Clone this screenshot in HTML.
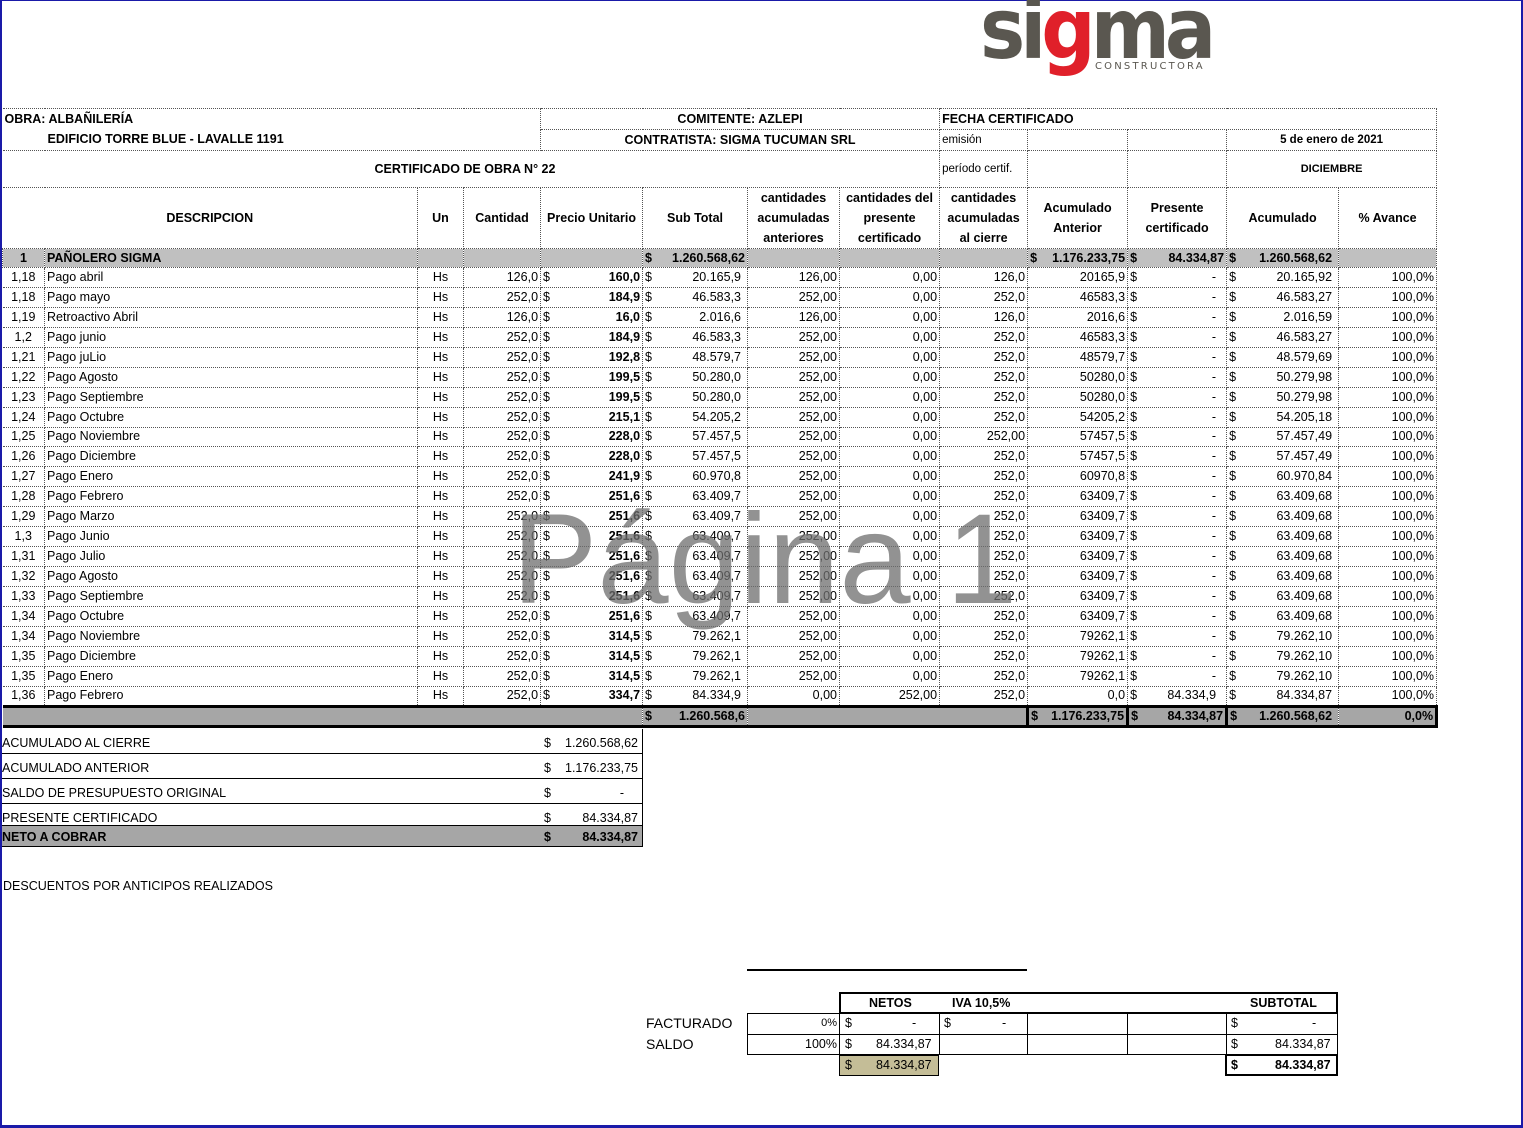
<!DOCTYPE html>
<html><head><meta charset="utf-8"><style>
*{margin:0;padding:0;box-sizing:border-box}
body{width:1523px;height:1128px;position:relative;background:#fff;font-family:"Liberation Sans Narrow","Liberation Sans",sans-serif;font-size:12.5px;color:#000;overflow:hidden}
.frame{position:absolute;left:0;top:0;width:1523px;height:1128px;border:2px solid #1a1aa8;border-top-width:1px;border-bottom-width:3px}
table.m{position:absolute;left:2px;top:108px;border-collapse:collapse;table-layout:fixed;width:1434px}
table.m td{border:1px dotted #555;white-space:nowrap;overflow:hidden;padding:0 2px;height:19px;line-height:17px}
.b{font-weight:bold}.c{text-align:center}.r{text-align:right}
.cur{display:flex;justify-content:space-between}
.sec td{background:#c0c0c0;font-weight:bold}
.tot td{background:#a6a6a6;font-weight:bold;border-top:3px solid #000!important;border-bottom:3px solid #000!important}
.abs{position:absolute;white-space:nowrap}
.logo{position:absolute;left:980px;top:-20px;font-family:"DejaVu Sans",sans-serif;font-weight:bold;font-size:76px;letter-spacing:-5px;color:#5a5750;transform:scaleY(1.1);transform-origin:0 0}
.wm{position:absolute;left:512px;top:486px;font-family:"Liberation Sans",sans-serif;font-size:128px;color:rgba(110,110,110,.75);white-space:nowrap}
.sum{position:absolute;left:2px;width:641px;height:25px;border-bottom:1px solid #000;border-right:1px solid #000;line-height:20px;padding-top:4px}
.sum .v{position:absolute;left:542px;right:4px;display:flex;justify-content:space-between;top:4px}
</style></head><body>
<div class="frame"></div>
<div class="logo">si<span style="color:#e0202a">g</span>ma</div>
<div class="abs" style="left:1095px;top:61px;font-family:'DejaVu Sans',sans-serif;font-size:10px;letter-spacing:2.2px;color:#5a5750">CONSTRUCTORA</div>

<table class="m">
<colgroup><col style="width:42px"><col style="width:373px"><col style="width:46px"><col style="width:77px"><col style="width:102px"><col style="width:105px"><col style="width:92px"><col style="width:100px"><col style="width:88px"><col style="width:100px"><col style="width:99px"><col style="width:112px"><col style="width:98px"></colgroup>
<tr style="height:21px"><td colspan="4" class="b" style="border-bottom:none;border-left:none">OBRA: ALBAÑILERÍA</td><td colspan="4" class="b c">COMITENTE: AZLEPI</td><td colspan="5" class="b">FECHA CERTIFICADO</td></tr>
<tr style="height:21px"><td colspan="4" class="b" style="border-top:none;border-left:none;padding-left:45px">EDIFICIO TORRE BLUE - LAVALLE 1191</td><td colspan="4" class="b c">CONTRATISTA: SIGMA TUCUMAN SRL</td><td style="font-size:11.5px">emisión</td><td></td><td></td><td colspan="2" class="c b" style="font-size:11.5px">5 de enero de 2021</td></tr>
<tr style="height:37px"><td colspan="8" class="b" style="border-left:none;padding-left:372px;text-align:left">CERTIFICADO DE OBRA N° 22</td><td style="font-size:11.5px">período certif.</td><td></td><td></td><td colspan="2" class="c b" style="font-size:11px">DICIEMBRE</td></tr>
<tr style="height:60px" class="b c"><td colspan="2" class="b c" style="border-left:none">DESCRIPCION</td><td class="b c">Un</td><td class="b c">Cantidad</td><td class="b c">Precio Unitario</td><td class="b c">Sub Total</td><td class="b c" style="line-height:20px;white-space:normal">cantidades acumuladas anteriores</td><td class="b c" style="line-height:20px;white-space:normal">cantidades del presente certificado</td><td class="b c" style="line-height:20px;white-space:normal">cantidades acumuladas al cierre</td><td class="b c" style="line-height:20px;white-space:normal">Acumulado Anterior</td><td class="b c" style="line-height:20px;white-space:normal">Presente certificado</td><td colspan="1" class="b c">Acumulado</td><td class="b c">% Avance</td></tr>
<tr class="sec"><td class="c">1</td><td>PAÑOLERO SIGMA</td><td></td><td></td><td></td><td><div class="cur"><span>$</span><span>1.260.568,62</span></div></td><td></td><td></td><td></td><td><div class="cur"><span>$</span><span>1.176.233,75</span></div></td><td><div class="cur"><span>$</span><span>84.334,87</span></div></td><td><div class="cur"><span>$</span><span style="padding-right:4px">1.260.568,62</span></div></td><td></td></tr>
<tbody id="rows"></tbody>
<tr class="tot"><td colspan="5" style="border-left:none"></td><td><div class="cur"><span>$</span><span>1.260.568,6</span></div></td><td colspan="3"></td><td style="border-left:3px solid #000"><div class="cur"><span>$</span><span>1.176.233,75</span></div></td><td style="border-left:3px solid #000"><div class="cur"><span>$</span><span>84.334,87</span></div></td><td style="border-left:3px solid #000"><div class="cur"><span>$</span><span style="padding-right:4px">1.260.568,62</span></div></td><td class="r" style="border-right:3px solid #000">0,0%</td></tr>
</table>
<script>
var d=[["1,18","Pago abril","126,0","160,0","20.165,9","126,00","0,00","126,0","20165,9","-","20.165,92"],
["1,18","Pago mayo","252,0","184,9","46.583,3","252,00","0,00","252,0","46583,3","-","46.583,27"],
["1,19","Retroactivo Abril","126,0","16,0","2.016,6","126,00","0,00","126,0","2016,6","-","2.016,59"],
["1,2","Pago junio","252,0","184,9","46.583,3","252,00","0,00","252,0","46583,3","-","46.583,27"],
["1,21","Pago juLio","252,0","192,8","48.579,7","252,00","0,00","252,0","48579,7","-","48.579,69"],
["1,22","Pago Agosto","252,0","199,5","50.280,0","252,00","0,00","252,0","50280,0","-","50.279,98"],
["1,23","Pago Septiembre","252,0","199,5","50.280,0","252,00","0,00","252,0","50280,0","-","50.279,98"],
["1,24","Pago Octubre","252,0","215,1","54.205,2","252,00","0,00","252,0","54205,2","-","54.205,18"],
["1,25","Pago Noviembre","252,0","228,0","57.457,5","252,00","0,00","252,00","57457,5","-","57.457,49"],
["1,26","Pago Diciembre","252,0","228,0","57.457,5","252,00","0,00","252,0","57457,5","-","57.457,49"],
["1,27","Pago Enero","252,0","241,9","60.970,8","252,00","0,00","252,0","60970,8","-","60.970,84"],
["1,28","Pago Febrero","252,0","251,6","63.409,7","252,00","0,00","252,0","63409,7","-","63.409,68"],
["1,29","Pago Marzo","252,0","251,6","63.409,7","252,00","0,00","252,0","63409,7","-","63.409,68"],
["1,3","Pago Junio","252,0","251,6","63.409,7","252,00","0,00","252,0","63409,7","-","63.409,68"],
["1,31","Pago Julio","252,0","251,6","63.409,7","252,00","0,00","252,0","63409,7","-","63.409,68"],
["1,32","Pago Agosto","252,0","251,6","63.409,7","252,00","0,00","252,0","63409,7","-","63.409,68"],
["1,33","Pago Septiembre","252,0","251,6","63.409,7","252,00","0,00","252,0","63409,7","-","63.409,68"],
["1,34","Pago Octubre","252,0","251,6","63.409,7","252,00","0,00","252,0","63409,7","-","63.409,68"],
["1,34","Pago Noviembre","252,0","314,5","79.262,1","252,00","0,00","252,0","79262,1","-","79.262,10"],
["1,35","Pago Diciembre","252,0","314,5","79.262,1","252,00","0,00","252,0","79262,1","-","79.262,10"],
["1,35","Pago Enero","252,0","314,5","79.262,1","252,00","0,00","252,0","79262,1","-","79.262,10"],
["1,36","Pago Febrero","252,0","334,7","84.334,9","0,00","252,00","252,0","0,0","84.334,9","84.334,87"]];
var h="";function cu(v,b,p){return '<td><div class="cur"><span>$</span><span'+(b?' class="b"':'')+(p?' style="padding-right:'+p+'px"':'')+'>'+v+'</span></div></td>';}
d.forEach(function(r){h+='<tr style="height:19.95px"><td class="c" style="border-left:none">'+r[0]+'</td><td>'+r[1]+'</td><td class="c">Hs</td><td class="r">'+r[2]+'</td>'+cu(r[3],1)+cu(r[4],0,4)+'<td class="r">'+r[5]+'</td><td class="r">'+r[6]+'</td><td class="r">'+r[7]+'</td><td class="r">'+r[8]+'</td>'+cu(r[9],0,8)+cu(r[10],0,4)+'<td class="r">100,0%</td></tr>';});
document.getElementById("rows").innerHTML=h;
</script>
<div class="wm">Página 1</div>

<div class="sum" style="top:729px">ACUMULADO AL CIERRE<div class="v"><span>$</span><span>1.260.568,62</span></div></div>
<div class="sum" style="top:754px">ACUMULADO ANTERIOR<div class="v"><span>$</span><span>1.176.233,75</span></div></div>
<div class="sum" style="top:779px">SALDO DE PRESUPUESTO ORIGINAL<div class="v"><span>$</span><span style="padding-right:14px">-</span></div></div>
<div class="sum" style="top:804px;height:22px">PRESENTE CERTIFICADO<div class="v"><span>$</span><span>84.334,87</span></div></div>
<div class="sum b" style="top:826px;height:21px;background:#a6a6a6;padding-top:1px">NETO A COBRAR<div class="v" style="top:1px"><span>$</span><span>84.334,87</span></div></div>
<div class="abs" style="left:3px;top:879px">DESCUENTOS POR ANTICIPOS REALIZADOS</div>

<div class="abs" style="left:747px;top:969px;width:280px;height:2px;background:#000"></div>
<div class="abs" style="left:839px;top:992px;width:499px;height:22px;border:2px solid #000"></div>
<div class="abs b" style="left:869px;top:996px">NETOS</div>
<div class="abs b" style="left:952px;top:996px">IVA 10,5%</div>
<div class="abs b" style="left:1250px;top:996px">SUBTOTAL</div>
<div class="abs" style="left:646px;top:1015px;font-family:'Liberation Sans',sans-serif;font-size:14px">FACTURADO</div>
<div class="abs" style="left:646px;top:1036px;font-family:'Liberation Sans',sans-serif;font-size:14px">SALDO</div>
<div class="abs" style="left:747px;top:1013px;width:591px;height:42px;border:1px solid #000"></div>
<div class="abs" style="left:747px;top:1034px;width:591px;height:1px;background:#000"></div>
<div class="abs" style="left:839px;top:1013px;width:1px;height:42px;background:#000"></div>
<div class="abs" style="left:939px;top:1013px;width:1px;height:42px;background:#000"></div>
<div class="abs" style="left:1027px;top:1013px;width:1px;height:42px;background:#000"></div>
<div class="abs" style="left:1127px;top:1013px;width:1px;height:42px;background:#000"></div>
<div class="abs" style="left:1226px;top:1013px;width:1px;height:42px;background:#000"></div>
<div class="abs" style="left:747px;top:1017px;width:90px;text-align:right;font-size:11px">0%</div>
<div class="abs" style="left:747px;top:1037px;width:90px;text-align:right">100%</div>
<div class="abs" style="left:845px;top:1016px">$</div><div class="abs" style="left:912px;top:1016px">-</div>
<div class="abs" style="left:944px;top:1016px">$</div><div class="abs" style="left:1002px;top:1016px">-</div>
<div class="abs" style="left:1231px;top:1016px">$</div><div class="abs" style="left:1312px;top:1016px">-</div>
<div class="abs" style="left:845px;top:1037px">$</div><div class="abs" style="left:876px;top:1037px">84.334,87</div>
<div class="abs" style="left:1231px;top:1037px">$</div><div class="abs" style="left:1275px;top:1037px">84.334,87</div>
<div class="abs" style="left:839px;top:1055px;width:100px;height:21px;background:#c4bd97;border:1px solid #000"></div>
<div class="abs" style="left:845px;top:1058px">$</div><div class="abs" style="left:876px;top:1058px">84.334,87</div>
<div class="abs" style="left:1225px;top:1054px;width:113px;height:22px;border:2px solid #000"></div>
<div class="abs b" style="left:1231px;top:1058px">$</div><div class="abs b" style="left:1275px;top:1058px">84.334,87</div>
</body></html>
